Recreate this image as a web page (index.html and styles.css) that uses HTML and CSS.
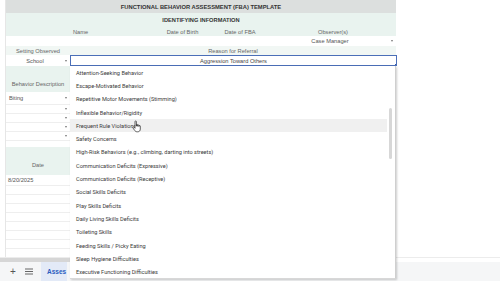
FILE: index.html
```html
<!DOCTYPE html>
<html lang="en">

<head>
    <meta charset="UTF-8">
    <title>Functional Behavior Assessment (FBA) Template</title>
    <meta name="viewport" content="width=device-width, initial-scale=1.0">
    <link rel="stylesheet" href="styles.css">
</head>

<body>
    <div class="page">
        <div class="sheet">
            <div class="grid">
                <div class="cell title span-all">FUNCTIONAL BEHAVIOR ASSESSMENT (FBA) TEMPLATE</div>
                <div class="cell section span-all">IDENTIFYING INFORMATION</div>

                <div class="cell label span-ab">Name</div>
                <div class="cell label">Date of Birth</div>
                <div class="cell label">Date of FBA</div>
                <div class="cell label">Observer(s)</div>

                <div class="cell value span-ab"></div>
                <div class="cell value"></div>
                <div class="cell value"></div>
                <div class="cell value dd"><span class="dd-text">Case Manager</span></div>

                <div class="cell label small">Setting Observed</div>
                <div class="cell label small span-rest">Reason for Referral</div>

                <div class="cell value dd"><span class="dd-text">School</span></div>
                <div class="cell value selected span-rest">Aggression Toward Others<span class="handle"></span></div>
            </div>

            <div class="col-a">
                <div class="head behav-head">Behavior Description</div>
                <div class="row dd first"><span class="dd-text left">Biting</span></div>
                <div class="row dd"><span class="dd-text"></span></div>
                <div class="row dd"><span class="dd-text"></span></div>
                <div class="row dd"><span class="dd-text"></span></div>
                <div class="row dd"><span class="dd-text"></span></div>
                <div class="row gap"></div>
                <div class="head date-head">Date</div>
                <div class="row date">8/20/2025</div>
                <div class="row"></div>
                <div class="row"></div>
                <div class="row"></div>
                <div class="row"></div>
                <div class="row"></div>
                <div class="row"></div>
                <div class="row"></div>
                <div class="row"></div>
            </div>
        </div>

        <div class="hscroll"><div class="thumb"></div></div>

        <div class="tabs">
            <span class="tab-btn plus">+</span>
            <span class="tab-btn menu">
                <svg width="8" height="7" viewBox="0 0 8 7"><path d="M0 1h8M0 3.5h8M0 6h8" stroke="#666" stroke-width="1"/></svg>
            </span>
            <span class="tab active">Asses</span>
        </div>
    </div>

    <div class="dropdown">
        <div class="item">Attention-Seeking Behavior</div>
        <div class="item">Escape-Motivated Behavior</div>
        <div class="item">Repetitive Motor Movements (Stimming)</div>
        <div class="item">Inflexible Behavior/Rigidity</div>
        <div class="item hover">Frequent Rule Violations</div>
        <div class="item">Safety Concerns</div>
        <div class="item">High-Risk Behaviors (e.g., climbing, darting into streets)</div>
        <div class="item">Communication Deficits (Expressive)</div>
        <div class="item">Communication Deficits (Receptive)</div>
        <div class="item">Social Skills Deficits</div>
        <div class="item">Play Skills Deficits</div>
        <div class="item">Daily Living Skills Deficits</div>
        <div class="item">Toileting Skills</div>
        <div class="item">Feeding Skills / Picky Eating</div>
        <div class="item">Sleep Hygiene Difficulties</div>
        <div class="item">Executive Functioning Difficulties</div>
        <div class="scrollbar"></div>
    </div>

    <svg class="cursor" width="10" height="13" viewBox="0 0 10 13">
        <path d="M3 7.2V1.6c0-.9 1.4-.9 1.4 0v4.6V5c0-.8 1.3-.8 1.3 0v1.3-.8c0-.8 1.3-.8 1.3 0v1 -.4c0-.8 1.3-.8 1.3 0v3c0 1.6-1 2.7-2.6 2.7H5C3.8 11.8 3.1 11 2.4 10L.9 7.9c-.5-.7.3-1.3.9-.8L3 8.3Z"
            fill="#fff" stroke="#222" stroke-width=".7" stroke-linejoin="round"/>
    </svg>
</body>

</html>
```

FILE: styles.css
```css
body {
    margin: 0;
    width: 500px;
    height: 281px;
    overflow: hidden;
    position: relative;
    background: #fff;
    font-family: "Liberation Sans", Arial, sans-serif;
    color: #666;
}

.page {
    display: flex;
    flex-direction: column;
    height: 281px;
}

.sheet {
    height: 257px;
    margin-left: 5px;
    width: 391px;
    border-left: 1px solid #e6e6e6;
    box-sizing: border-box;
}

.grid {
    display: grid;
    grid-template-columns: 64px 85px 55px 60px 126px;
    grid-template-rows: 13px 12px 11px 10px 9px 11px;
}

.cell {
    display: flex;
    align-items: center;
    justify-content: center;
    font-size: 5.7px;
    white-space: nowrap;
    overflow: hidden;
}

.span-all {
    grid-column: 1 / -1;
}

.span-ab {
    grid-column: 1 / 3;
}

.span-rest {
    grid-column: 2 / -1;
}

.title {
    background: #dcdfde;
    font-weight: bold;
    color: #333;
    font-size: 5.8px;
}

.section {
    background: #e9f3ef;
    font-weight: bold;
    color: #333;
    padding-top: 2px;
    box-sizing: border-box;
}

.label {
    background: #e9f3ef;
    padding-top: 2px;
    box-sizing: border-box;
}

.label.small {
    background: #f1f7f4;
    padding-top: 1px;
}

.value {
    background: #fff;
    color: #555;
}

.dd {
    position: relative;
    justify-content: flex-start;
}

.dd-text {
    flex: 1;
    text-align: center;
    padding-right: 6px;
}

.dd-text.left {
    text-align: left;
    padding-left: 3px;
}

.dd::after {
    content: "";
    position: absolute;
    right: 3px;
    top: 50%;
    margin-top: -1px;
    border-left: 1.5px solid transparent;
    border-right: 1.5px solid transparent;
    border-top: 2px solid #777;
}

.selected {
    position: relative;
    border: 1px solid #4b6fb8;
    box-sizing: border-box;
    margin-right: -1px;
    color: #444;
}

.handle {
    position: absolute;
    right: -2px;
    bottom: -2px;
    width: 3px;
    height: 3px;
    background: #3d5fa8;
}

.col-a {
    width: 64px;
    display: flex;
    flex-direction: column;
}

.head {
    background: #e9f3ef;
    display: flex;
    align-items: flex-end;
    justify-content: center;
    font-size: 5.7px;
}

.behav-head {
    height: 26px;
    padding-bottom: 5px;
    box-sizing: border-box;
}

.date-head {
    height: 28px;
    padding-bottom: 7px;
    box-sizing: border-box;
}

.row {
    height: 9px;
    display: flex;
    align-items: center;
    font-size: 5.7px;
    color: #555;
    border-bottom: 1px solid #eeeeee;
    box-sizing: border-box;
}

.row.first {
    height: 13px;
}

.row.gap {
    height: 6px;
    border-bottom: none;
}

.row.date {
    height: 11px;
    padding-left: 2px;
}

.hscroll {
    height: 6px;
    border-top: 1px solid #ececec;
    display: flex;
}

.thumb {
    width: 70px;
    height: 4px;
    background: #d6d6d6;
}

.tabs {
    flex: 1;
    background: #f5f6f7;
    display: flex;
    align-items: center;
    padding-left: 9px;
}

.tab-btn {
    display: flex;
    justify-content: center;
    align-items: center;
    color: #555;
}

.plus {
    font-size: 10px;
    width: 8px;
}

.menu {
    margin-left: 6px;
    width: 12px;
}

.tab {
    margin-left: 6px;
    height: 19px;
    width: 26px;
    box-sizing: border-box;
    overflow: hidden;
    display: flex;
    align-items: center;
    padding-left: 6px;
    background: #e3eaf7;
    color: #2a5cbf;
    font-weight: bold;
    font-size: 6.5px;
}

.dropdown {
    position: absolute;
    left: 70px;
    top: 66px;
    width: 326px;
    height: 213px;
    background: #fff;
    border-right: 1px solid #cfcfcf;
    border-bottom: 1px solid #d8d8d8;
    box-shadow: 1px 1px 2px rgba(0, 0, 0, 0.2);
    box-sizing: border-box;
    font-family: Roboto, "Liberation Sans", sans-serif;
    overflow: hidden;
}

.item {
    height: 13.3px;
    margin-right: 8px;
    display: flex;
    align-items: center;
    padding-left: 6px;
    font-size: 5.6px;
    color: #3a3a3a;
    white-space: nowrap;
}

.item.hover {
    background: #f0f0f0;
}

.scrollbar {
    position: absolute;
    right: 3px;
    top: 42px;
    width: 3px;
    height: 51px;
    background: #d7d7d7;
    border-radius: 2px;
}

.cursor {
    position: absolute;
    left: 132px;
    top: 120px;
}
```
